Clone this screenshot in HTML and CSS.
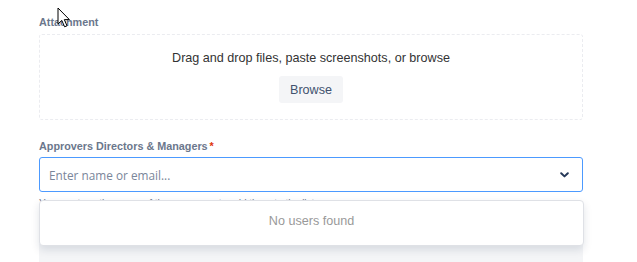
FILE: index.html
```html
<!DOCTYPE html>
<html lang="en">
<head>
    <meta charset="UTF-8">
    <title>Request form</title>
    <link rel="stylesheet" href="styles.css">
</head>
<body>
<div class="form">
    <div class="field">
        <label class="field-label">Attachment</label>
        <div class="dropzone">
            <p>Drag and drop files, paste screenshots, or browse</p>
            <button class="browse">Browse</button>
        </div>
    </div>

    <div class="field">
        <label class="field-label">Approvers Directors &amp; Managers<span class="req">*</span></label>
        <div class="picker">
            <div class="select">
                <input type="text" placeholder="Enter name or email...">
                <svg class="chevron" width="9" height="6" viewBox="0 0 9 6">
                    <path d="M1.2 1.2 L4.5 4.4 L7.8 1.2" fill="none" stroke="#253858" stroke-width="2" stroke-linecap="round" stroke-linejoin="round"/>
                </svg>
            </div>
            <div class="helper">You can type the name of the approvers to add them to the list</div>
            <div class="menu">No users found</div>
        </div>
        <div class="next-field"></div>
    </div>
</div>

<svg class="cursor" width="14" height="22" viewBox="0 0 14 22">
    <path d="M1 1 L1 17 L4.8 13.4 L7.6 19.8 L10 18.8 L7.3 12.6 L12.4 12.6 Z" fill="#fff" stroke="#000" stroke-width="1"/>
</svg>
</body>
</html>
```

FILE: styles.css
```css
html, body {
    margin: 0;
    background: #fff;
}

body {
    font-family: 'Liberation Sans', Arial, sans-serif;
    color: #172b4d;
    position: relative;
    height: 262px;
    overflow: hidden;
}

.form {
    width: 544px;
    margin-left: 39px;
    padding-top: 16px;
}

.field-label {
    display: block;
    font-size: 10.8px;
    font-weight: bold;
    color: #6b778c;
    line-height: 13px;
    margin-bottom: 5px;
}

.req {
    color: #de350b;
    margin-left: 2px;
}

.dropzone {
    height: 86px;
    border: 1px dashed #ebecf0;
    border-radius: 3px;
    text-align: center;
    box-sizing: border-box;
}

.dropzone p {
    margin: 16px 0 10px;
    font-size: 12.6px;
    color: #333;
    line-height: 15px;
}

.browse {
    background: #f4f5f7;
    color: #42526e;
    border: none;
    border-radius: 3px;
    width: 64px;
    height: 27px;
    font-family: 'Liberation Sans', Arial, sans-serif;
    font-size: 12.6px;
    padding: 0;
}

.field + .field {
    margin-top: 20px;
}

.field + .field .field-label {
    margin-bottom: 4px;
}

.picker {
    position: relative;
}

.select {
    display: flex;
    align-items: center;
    height: 35px;
    border: 1px solid #4c9aff;
    border-radius: 3px;
    box-sizing: border-box;
    padding: 0 13px 0 9px;
}

.select input {
    flex: 1;
    border: none;
    outline: none;
    font-family: 'Open Sans', sans-serif;
    font-size: 11.8px;
    color: #172b4d;
    padding: 0;
    background: transparent;
}

.select input::placeholder {
    color: #7a869a;
}

.helper {
    font-size: 10px;
    color: #6b778c;
    margin-top: 6px;
    line-height: 12px;
}

.menu {
    position: absolute;
    top: 43px;
    left: 0;
    right: -1px;
    height: 46px;
    box-sizing: border-box;
    background: #fff;
    border: 1px solid #dfe1e6;
    border-radius: 4px;
    box-shadow: 0 4px 8px rgba(9, 30, 66, 0.12);
    text-align: center;
    line-height: 41px;
    font-size: 12.6px;
    color: #999;
}

.next-field {
    margin-top: 27px;
    height: 40px;
    background: #f4f5f7;
}

.cursor {
    position: absolute;
    left: 57px;
    top: 7px;
}
```
